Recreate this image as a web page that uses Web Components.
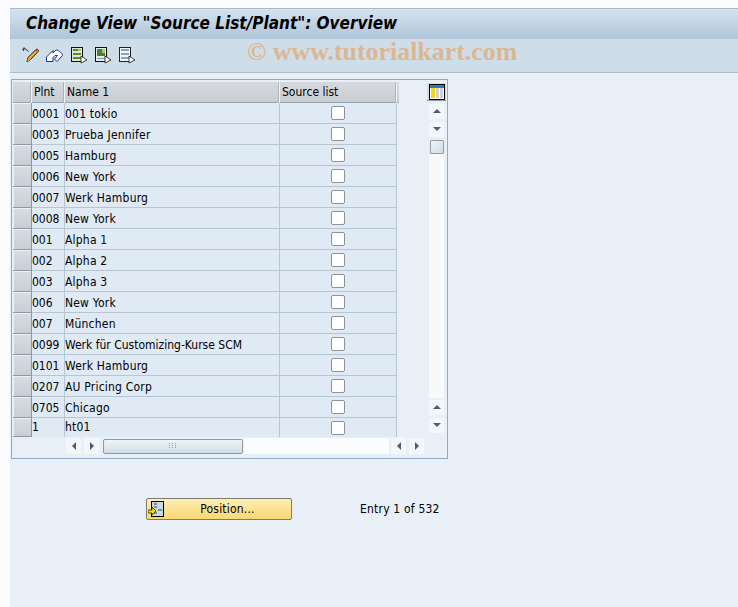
<!DOCTYPE html>
<html><head><meta charset="utf-8"><style>
html,body{margin:0;padding:0;background:#fbfcfd;height:607px;overflow:hidden}
body{font-family:"DejaVu Sans",sans-serif}
</style></head><body>
<sap-screen>
  <sap-title slot="title">Change View "Source List/Plant": Overview</sap-title>
  <sap-toolbar slot="toolbar"></sap-toolbar>
  <sap-table></sap-table>
  <sap-footer></sap-footer>
</sap-screen>
<script>
const D=[["0001","001 tokio"],["0003","Prueba Jennifer"],["0005","Hamburg"],["0006","New York"],["0007","Werk Hamburg"],["0008","New York"],["001","Alpha 1"],["002","Alpha 2"],["003","Alpha 3"],["006","New York"],["007","München"],["0099","Werk für Customizing-Kurse SCM"],["0101","Werk Hamburg"],["0207","AU Pricing Corp"],["0705","Chicago"],["1","ht01"]];
const F='font:12px/21px "DejaVu Sans",sans-serif;font-stretch:condensed;';
class Base extends HTMLElement{
  constructor(){super();this.attachShadow({mode:"open"});this.shadowRoot.innerHTML=this.constructor.html}
}
class Screen extends Base{static html=`<style>
:host{display:flex;flex-direction:column;position:absolute;left:10px;top:8px;right:0;bottom:0;background:#e8eff7;overflow:hidden}
.wm{position:absolute;left:237px;top:27px;font:bold 25.9px/34px "Liberation Serif",serif;color:#e2a15f;opacity:.62;white-space:nowrap}
.main{display:flex;flex-direction:column;padding:6px 0 0 1px}
</style><slot name="title"></slot><slot name="toolbar"></slot><div class="main"><slot></slot></div><div class="wm">© www.tutorialkart.com</div>`}
class Title extends Base{static html=`<style>
:host{display:block;height:30px;border-top:1px solid #a9bccd;background:linear-gradient(#d5e2ee,#aec5da);font:italic bold 17px/29px "DejaVu Sans",sans-serif;font-stretch:condensed;color:#000;padding-left:16px;white-space:nowrap}
</style><slot></slot>`}
const ic={
pencil:`<svg width="18" height="18" viewBox="0 0 18 18"><path d="M.5 3.500C1 1.500 3 1.500 3.500 3s2 .5 3 2.500M2 2.500l-.5 2.500" fill="none" stroke="#222" stroke-width="1"/><path d="M5 16l1-4.500L14 3.500c1-1 2.500.5 2.500 1.500L8.500 13.500z" fill="#f3b93a" stroke="#111" stroke-width="1"/><path d="M6 12l2.500 1.500L5 16z" fill="#f49b4c"/><path d="M13.500 4l2.500 2.500" stroke="#e7502c" stroke-width="1.500"/></svg>`,
undo:`<svg width="18" height="18" viewBox="0 0 18 18"><path d="M.5 11L7 4.500V7l3-3c3 0 6.500 3.500 6.500 5.500L11 15.500 8.500 13l3-3.500H9L7 11.500v4H.5z" fill="#fff" stroke="#2030a0" stroke-width="1" stroke-linejoin="round"/></svg>`,
d1:`<svg width="18" height="18" viewBox="0 0 18 18"><rect x="1.500" y="1.500" width="11" height="14" fill="#dfe6d8" stroke="#111"/><path d="M3 3h8v2H3zM3 7h8v2H3zM3 11h8v2H3z" fill="#5c8b2a"/><path d="M8 3h3v2H8z" fill="#a9c86a"/><path d="M11 10l6 4-6 3z" fill="#fff" stroke="#111" stroke-width=".8"/></svg>`,
d2:`<svg width="18" height="18" viewBox="0 0 18 18"><rect x="1.500" y="1.500" width="11" height="14" fill="#e6ecf0" stroke="#111"/><path d="M3 3h8v7H3z" fill="#4f8226"/><path d="M8 3h3v4H8z" fill="#a9c86a"/><path d="M3 12h8v1H3z" fill="#7f93a5"/><path d="M11 10l6 4-6 3z" fill="#fff" stroke="#111" stroke-width=".8"/></svg>`,
d3:`<svg width="18" height="18" viewBox="0 0 18 18"><rect x="1.500" y="1.500" width="11" height="14" fill="#f4f7f9" stroke="#222"/><path d="M3 3h8v2H3zM3 7h8v2H3zM3 11h8v2H3z" fill="#8da2b5"/><path d="M11 10l6 4-6 3z" fill="#fff" stroke="#111" stroke-width=".8"/></svg>`};
class Toolbar extends Base{static html=`<style>
:host{display:flex;align-items:center;gap:6px;height:34px;box-sizing:border-box;padding:0 0 2px 12px;background:#cfdde8;border-bottom:1px solid #a9bccd}
svg{display:block}
</style>${ic.pencil}${ic.undo}${ic.d1}${ic.d2}${ic.d3}`}
class Row extends Base{static html=`<style>
:host{display:grid;grid-template-columns:19px 33px 215px 117px;height:21px;box-sizing:border-box;${F}color:#000}
.sel{background:linear-gradient(#d8dde3,#c9ced4);border:1px solid #8b98a5;border-width:0 1px 1px 0;box-shadow:inset 1px 1px 0 #eef1f4;box-sizing:border-box}
.c{background:#dfeaf5;border-right:1px solid #b7c5d0;border-bottom:1px solid #b7c5d0;white-space:nowrap;overflow:hidden;padding-top:1px;line-height:20px;box-sizing:border-box;letter-spacing:.2px}
.n{letter-spacing:0}
:host([long]) #b{letter-spacing:0}
.ck{display:flex;align-items:center;justify-content:center;padding:0}
i{display:block;width:12px;height:12px;background:#fff;border:1px solid #8d9297;border-radius:2px}
:host([last]) .c{border-bottom:0;padding-top:0;line-height:19px}
:host([last]){height:19px}
</style><div class="sel"></div><div class="c n" id="a"></div><div class="c" id="b"></div><div class="c ck"><i></i></div>`;
 connectedCallback(){this.shadowRoot.getElementById("a").textContent=this.getAttribute("a");this.shadowRoot.getElementById("b").textContent=this.getAttribute("b")}}
const arrow=(dir)=>{const p={u:"M1 6l4-4 4 4z",d:"M1 2l4 4 4-4z",l:"M7 1L3 5l4 4z",r:"M3 1l4 4-4 4z"}[dir];return `<span class="ab"><svg width="10" height="10" viewBox="0 0 10 10"><path d="${p}" fill="#4c5f70"/></svg></span>`};
class Table extends Base{static html=`<style>
:host{display:grid;grid-template-columns:386px 1fr;grid-template-rows:354px 16px;width:437px;height:380px;box-sizing:border-box;border:1px solid #8fabc6;background:#e8eff7;padding:2px 0 0 1px}
.left{display:flex;flex-direction:column;min-width:0}
.hd{display:grid;grid-template-columns:19px 33px 215px 117px;height:21px;box-sizing:border-box;${F}color:#000;background:linear-gradient(#d6dade,#c8cdd2);border-bottom:1px solid #98a5b0}
.hd div{border-right:1px solid #f1f3f5;box-shadow:inset -1px 0 0 #a9b3bc;padding-left:2px;white-space:nowrap;box-sizing:border-box}
.hb{grid-column:1/3;display:flex;align-items:center;height:16px;margin:2px 0 0 53px}
.hb .t{width:140px;height:15px;margin:0 1px 0 1px;box-sizing:border-box;border:1px solid #8e9aa3;border-radius:2px;background:linear-gradient(#eef3f8,#d1dde7);display:flex;align-items:center;justify-content:center}
.hb .fill{width:145px;height:16px;background:#fbfcfd;margin-right:2px}
.ab{display:flex;align-items:center;justify-content:center;width:15px;height:16px;background:#f3f6fa;margin-right:3px;flex:none}
.right{display:flex;flex-direction:column;align-items:flex-start;min-height:0}
.cfg{width:19px;height:18px;display:flex;align-items:center;justify-content:center;background:#d3dbe3;box-sizing:border-box;border-bottom:1px solid #8d9aa6;margin:1px 0 0 28px}
.vs{display:flex;flex-direction:column;align-items:flex-start;flex:1;min-height:0;margin:3px 0 0 30px}
.vs .ab{margin:0 0 3px;height:15px;width:15px}
.thumb{width:14px;height:14px;box-sizing:border-box;border:1px solid #929da6;border-radius:1px;background:linear-gradient(135deg,#f0f4f8,#cfdbe6);margin-left:1px}
.track{flex:1;width:15px;background:#f7f9fb;margin-bottom:2px;min-height:0}
</style><div class="left"><div class="hd"><div></div><div>Plnt</div><div>Name 1</div><div>Source list</div></div><div id="rows"></div></div>
<div class="right"><div class="cfg"><svg width="16" height="16" viewBox="0 0 16 16"><rect x=".5" y=".5" width="15" height="15" fill="#fff" stroke="#000"/><rect x="1" y="1" width="14" height="3" fill="#2a7ab8"/><rect x="2" y="4" width="4" height="10" fill="#f4d90c"/><rect x="7" y="4" width="3" height="10" fill="#cdd3d8"/><rect x="11" y="4" width="3" height="10" fill="#cdd3d8"/></svg></div>
<div class="vs">${arrow("u")}${arrow("d")}<div class="thumb"></div><div class="track"></div>${arrow("u")}${arrow("d")}</div></div>
<div class="hb">${arrow("l")}${arrow("r")}<div class="t"><svg width="8" height="6" viewBox="0 0 8 6"><path d="M0 .5h1M3 .5h1M6 .5h1M0 2.500h1M3 2.500h1M6 2.500h1M0 4.500h1M3 4.500h1M6 4.500h1" stroke="#8b98a3" stroke-width="1"/></svg></div><div class="fill"></div>${arrow("l")}${arrow("r")}</div>`;
 connectedCallback(){const r=this.shadowRoot.getElementById("rows");D.forEach((d,i)=>{const e=document.createElement("sap-row");e.setAttribute("a",d[0]);e.setAttribute("b",d[1]);if(i==15)e.setAttribute("last","");if(i==11)e.setAttribute("long","");r.append(e)})}}
class Footer extends Base{static html=`<style>
:host{display:flex;align-items:center;height:22px;margin-top:39px;padding-left:135px;${F}color:#000;letter-spacing:.2px}
.btn{display:flex;align-items:center;width:146px;height:22px;box-sizing:border-box;border:1px solid #7b7b72;border-radius:2px;background:linear-gradient(#fdf0b8,#fbe08a 60%,#f8d977)}
.btn span{flex:1;text-align:center}
.btn svg{margin-left:1px}
.e{margin-left:68px}
</style><div class="btn"><svg width="16" height="16" viewBox="0 0 16 16"><rect x="3.500" y=".5" width="12" height="15" fill="#c9d8e6" stroke="#000"/><path d="M6 3h3M6 6h3M10 9h4M6 12h3" stroke="#345" stroke-width="1"/><path d="M0 9h4V6l4 4-4 4v-2H0z" fill="#f9d71c" stroke="#111" stroke-width=".7"/></svg><span>Position...</span></div><div class="e">Entry 1 of 532</div>`}
customElements.define("sap-screen",Screen);customElements.define("sap-title",Title);customElements.define("sap-toolbar",Toolbar);customElements.define("sap-row",Row);customElements.define("sap-table",Table);customElements.define("sap-footer",Footer);
</script></body></html>
